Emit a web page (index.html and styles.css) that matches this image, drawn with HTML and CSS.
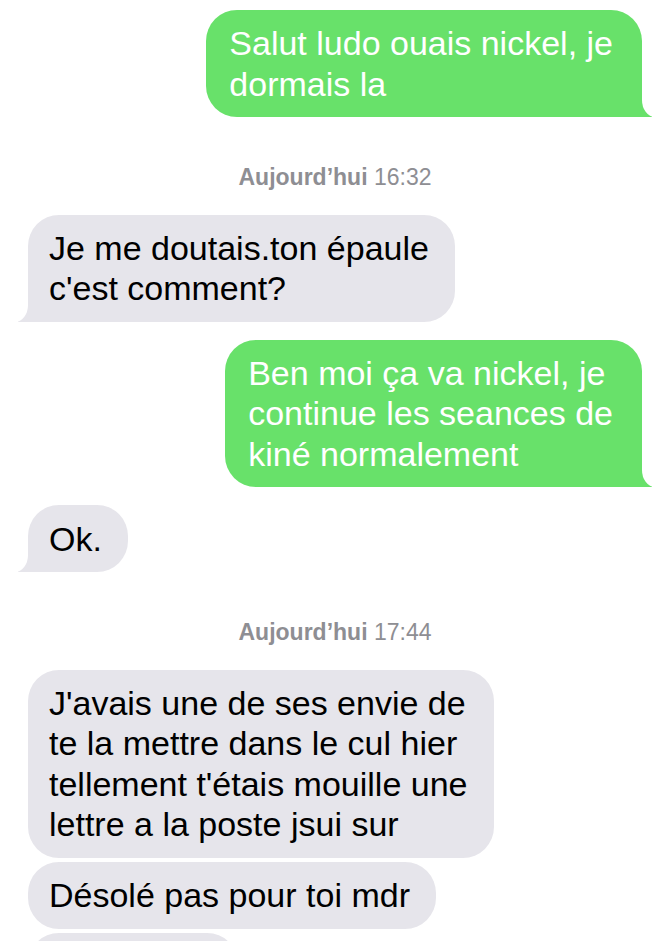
FILE: index.html
```html
<!DOCTYPE html>
<html lang="fr">
<head>
<meta charset="utf-8">
<title>Messages</title>
<link rel="stylesheet" href="styles.css">
</head>
<body>
<div class="thread">
  <div class="msg sent tail">Salut ludo ouais nickel, je<br>dormais la</div>
  <div class="stamp"><b>Aujourd’hui</b> 16:32</div>
  <div class="msg recv tail">Je me doutais.ton épaule<br>c'est comment?</div>
  <div class="msg sent tail gap">Ben moi ça va nickel, je<br>continue les seances de<br>kiné normalement</div>
  <div class="msg recv tail gap">Ok.</div>
  <div class="stamp"><b>Aujourd’hui</b> 17:44</div>
  <div class="msg recv">J'avais une de ses envie de<br>te la mettre dans le cul hier<br>tellement t'étais mouille une<br>lettre a la poste jsui sur</div>
  <div class="msg recv near">Désolé pas pour toi mdr</div>
  <div class="msg recv near peek"></div>
</div>
</body>
</html>
```
FILE: styles.css
```css
html, body {
  margin: 0;
  padding: 0;
  height: 941px;
  overflow: hidden;
  background: #ffffff;
}

.thread {
  display: flex;
  flex-direction: column;
  padding: 10px 15px 0 28px;
  font-family: "Liberation Sans", Arial, sans-serif;
}

.msg {
  position: relative;
  z-index: 0;
  font-size: 34px;
  line-height: 40.3px;
  white-space: nowrap;
  border-radius: 31px;
}

.sent {
  align-self: flex-end;
  background: #68e16a;
  color: #ffffff;
  padding: 13.3px 29px 13.3px 23px;
}

.recv {
  align-self: flex-start;
  background: #e6e5eb;
  color: #000000;
  padding: 13.3px 26px 13.3px 21px;
}

.gap {
  margin-top: 18px;
}

.near {
  margin-top: 4.5px;
}

.peek {
  width: 163px;
  height: 40.3px;
}

.tail::before,
.tail::after {
  content: "";
  position: absolute;
  bottom: 0;
  z-index: -1;
}

.recv.tail::before {
  left: -10px;
  width: 42px;
  height: 32px;
  background: #e6e5eb;
}

.recv.tail::after {
  left: -24px;
  width: 24px;
  height: 34px;
  background: #ffffff;
  border-bottom-right-radius: 13px 17px;
}

.sent.tail::before {
  right: -10px;
  width: 42px;
  height: 32px;
  background: #68e16a;
}

.sent.tail::after {
  right: -24px;
  width: 24px;
  height: 34px;
  background: #ffffff;
  border-bottom-left-radius: 13px 17px;
}

.stamp {
  align-self: center;
  margin: 47px 0 24.5px;
  font-size: 23px;
  line-height: 26px;
  color: #8e8e93;
}

.stamp b {
  font-weight: 700;
}
```
